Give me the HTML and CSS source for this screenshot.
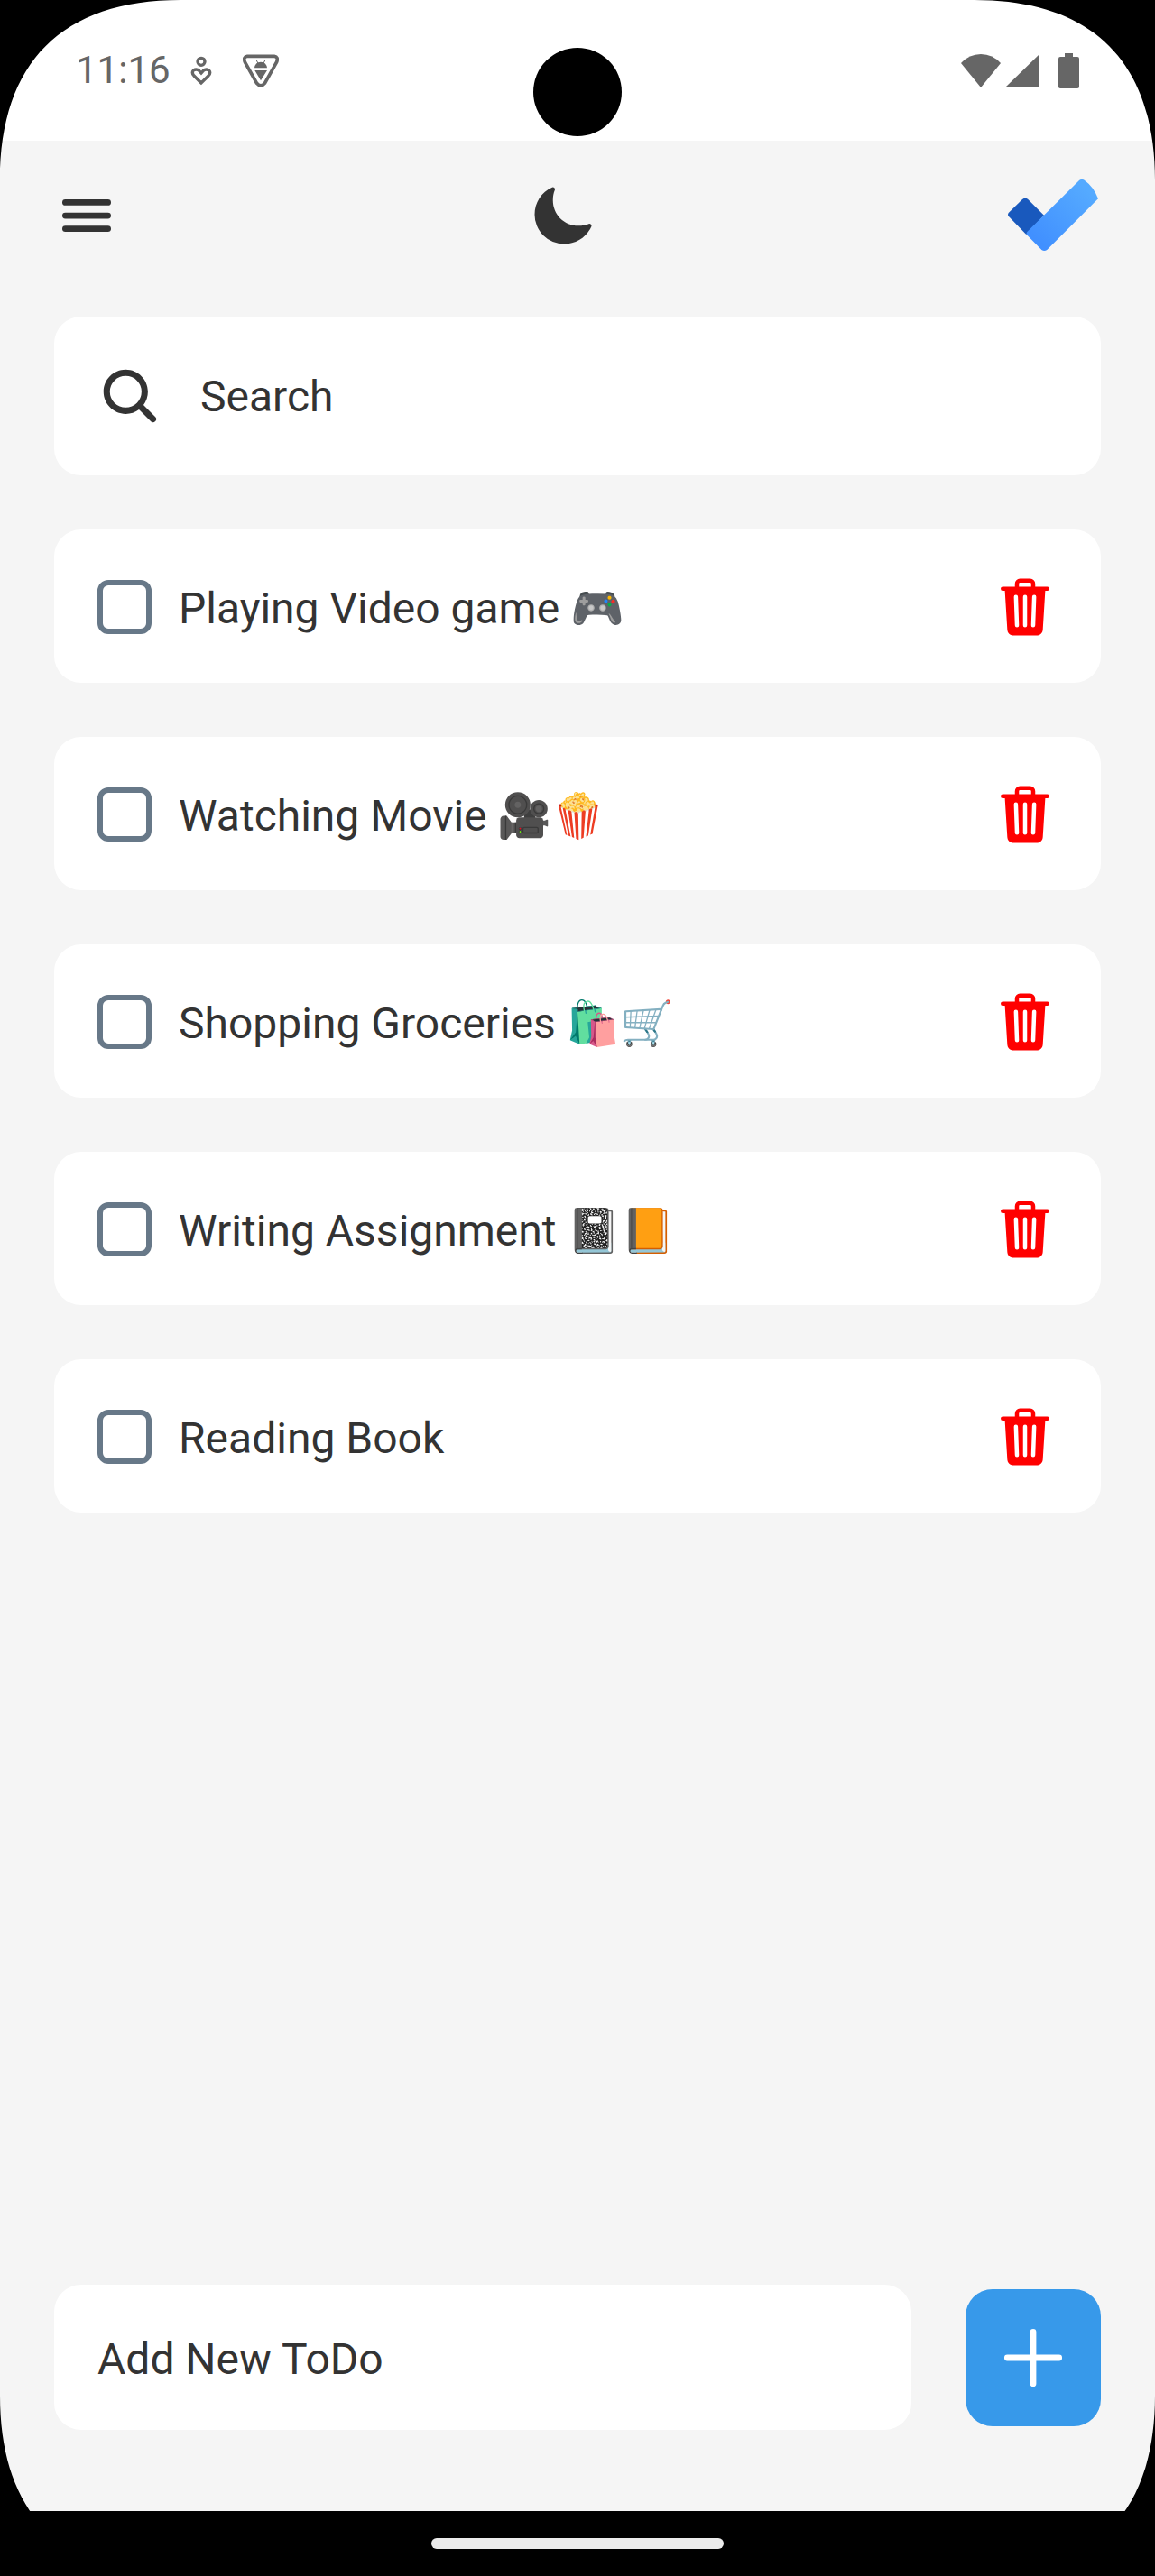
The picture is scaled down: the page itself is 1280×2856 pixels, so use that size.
FILE: index.html
```html
<!DOCTYPE html>
<html lang="en">
<head>
<meta charset="utf-8">
<meta name="viewport" content="width=device-width, initial-scale=1">
<title>ToDo</title>
<link rel="stylesheet" href="styles.css">
</head>
<body>
<svg class="defs" aria-hidden="true">
  <symbol id="trash" viewBox="0 0 512 512"><path d="M432 96h-96V72a40 40 0 00-40-40h-80a40 40 0 00-40 40v24H80a16 16 0 000 32h17l19 304.92c1.42 26.85 22 47.08 48 47.08h184c26.13 0 46.3-19.78 48-47l19-305h17a16 16 0 000-32zM192.57 416H192a16 16 0 01-16-15.43l-8-224a16 16 0 1132-1.14l8 224A16 16 0 01192.57 416zM272 400a16 16 0 01-32 0V176a16 16 0 0132 0zm32-304h-96V72a7.91 7.91 0 018-8h80a7.91 7.91 0 018 8zm32 304.57A16 16 0 01320 416h-.58A16 16 0 01304 399.43l8-224a16 16 0 1132 1.14z"/></symbol>
  <symbol id="corner" viewBox="0 0 200 200"><path d="M0 0H200C69 0 0 69 0 200z"/></symbol>
</svg>
<div class="screen">
  <div class="status">
    <div class="status-left">
      <span class="time">11:16</span>
      <svg class="wellbeing" viewBox="633 184 72 99" fill="none" stroke="currentColor" stroke-width="10"><circle cx="669" cy="203" r="12"/><path d="M669 274L645 250Q636 240 643 232Q653 225 662 233L669 241L676 233Q685 225 695 232Q702 240 693 250z"/></svg>
      <svg class="debug" viewBox="807 180 120 111"><path d="M822 187H912Q926 189 920 206L881 276Q867 293 853 276L814 206Q808 189 822 187z" fill="none" stroke="currentColor" stroke-width="11"/><path d="M846 226Q848 207 867 206Q886 207 888 226zM847 234H888L867 268z" fill="currentColor"/><path d="M852 199L858 211M882 199L876 211" stroke="currentColor" stroke-width="3"/></svg>
    </div>
    <div class="status-right">
      <svg class="wifi" viewBox="0 0 46 39"><path d="M23 38L1 11Q10 1 23 1T45 11z"/></svg>
      <svg class="signal" viewBox="0 0 39 39"><path d="M0 38L38 1V38z"/></svg>
      <svg class="battery" viewBox="0 0 23 39"><path d="M7 0h9v4h5q2 0 2 2v31q0 2-2 2H2q-2 0-2-2V6q0-2 2-2h5z"/></svg>
    </div>
    <div class="camera"></div>
  </div>

  <main class="app">
    <header class="header">
      <button class="icon-btn" aria-label="Menu"><svg class="icon" viewBox="0 0 512 512" fill="none" stroke="currentColor" stroke-width="48" stroke-linecap="round"><path d="M88 152H424M88 256H424M88 360H424"/></svg></button>
      <button class="icon-btn" aria-label="Dark mode"><svg class="icon" viewBox="0 0 512 512"><path d="M264 480A232 232 0 0132 248c0-94 54-178.28 137.61-214.67a16 16 0 0121.06 21.06C181.07 76.43 176 104.66 176 136c0 110.28 89.72 200 200 200 31.34 0 59.57-5.07 81.61-14.67a16 16 0 0121.06 21.06C442.28 426 358 480 264 480z"/></svg></button>
      <svg class="logo" viewBox="408 597 312 240" role="img" aria-label="ToDo logo">
        <defs><linearGradient id="tick" x1="0" y1="1" x2="1" y2="0"><stop offset=".15" stop-color="#4190ff"/><stop offset=".85" stop-color="#55aaff"/></linearGradient></defs>
        <path fill="#1959bd" d="M413 719Q409 714 413 708L459 663Q468 656 477 662L531 716L472 780z"/>
        <path fill="url(#tick)" d="M523 831L475 782Q471 776 475 771L648 600Q656 594 665 599Q697 622 711 661L541 831Q532 837 523 831z"/>
      </svg>
    </header>

    <label class="card search">
      <svg class="icon" viewBox="0 0 512 512" aria-hidden="true"><path d="M456.69 421.39L362.6 327.3a173.81 173.81 0 0034.84-104.58C397.44 126.38 319.06 48 222.72 48S48 126.38 48 222.72s78.38 174.72 174.72 174.72A173.81 173.81 0 00327.3 362.6l94.09 94.09a25 25 0 0035.3-35.3zM97.92 222.72a124.8 124.8 0 11124.8 124.8 124.95 124.95 0 01-124.8-124.8z"/></svg>
      <input class="field query" type="search" placeholder="Search" aria-label="Search">
    </label>

    <ul class="list">
      <li class="card item"><input class="check" type="checkbox" id="t1"><label class="text" for="t1">Playing Video game 🎮</label><button class="icon-btn delete" aria-label="Delete"><svg class="icon"><use href="#trash"/></svg></button></li>
      <li class="card item"><input class="check" type="checkbox" id="t2"><label class="text" for="t2">Watching Movie 🎥🍿</label><button class="icon-btn delete" aria-label="Delete"><svg class="icon"><use href="#trash"/></svg></button></li>
      <li class="card item"><input class="check" type="checkbox" id="t3"><label class="text" for="t3">Shopping Groceries 🛍️🛒</label><button class="icon-btn delete" aria-label="Delete"><svg class="icon"><use href="#trash"/></svg></button></li>
      <li class="card item"><input class="check" type="checkbox" id="t4"><label class="text" for="t4">Writing Assignment 📓📙</label><button class="icon-btn delete" aria-label="Delete"><svg class="icon"><use href="#trash"/></svg></button></li>
      <li class="card item"><input class="check" type="checkbox" id="t5"><label class="text" for="t5">Reading Book</label><button class="icon-btn delete" aria-label="Delete"><svg class="icon"><use href="#trash"/></svg></button></li>
    </ul>

    <form class="add">
      <input class="card field new" type="text" placeholder="Add New ToDo" aria-label="Add New ToDo">
      <button class="add-btn" type="button" aria-label="Add"><svg class="plus" viewBox="0 0 512 512" fill="none" stroke="currentColor" stroke-width="34" stroke-linecap="round"><path d="M256 112V400M400 256H112"/></svg></button>
    </form>
  </main>

  <div class="nav"><div class="handle"></div></div>

  <svg class="corner top left"><use href="#corner"/></svg>
  <svg class="corner top right"><use href="#corner"/></svg>
  <svg class="corner bottom left"><use href="#corner"/></svg>
  <svg class="corner bottom right"><use href="#corner"/></svg>
</div>
</body>
</html>
```
FILE: styles.css
```css
* { box-sizing: border-box; }
body { margin: 0; background: #000; color: #333; font: 48px/56px Roboto, "Noto Color Emoji", sans-serif; }
button, input { font: inherit; color: inherit; border: 0; padding: 0; margin: 0; background: none; }
svg { display: block; fill: currentColor; }
svg[fill="none"] { fill: none; }
.defs { display: none; }

.screen { position: relative; display: flex; flex-direction: column; min-height: 100vh; background: #f5f5f5; overflow: hidden; }

/* status bar */
.status { position: relative; display: flex; justify-content: space-between; padding: 58px 84px; background: #fff; color: #666; }
.status-left, .status-right { display: flex; align-items: center; height: 40px; }
.time { font-size: 42px; line-height: 40px; margin-right: 22px; }
.wellbeing { width: 24px; height: 33px; margin-right: 34px; }
.debug { width: 40px; height: 37px; }
.wifi { width: 46px; height: 39px; margin-right: 4px; }
.signal { width: 39px; height: 39px; margin-right: 20px; }
.battery { width: 23px; height: 39px; }
.camera { position: absolute; left: 50%; top: 53px; width: 98px; height: 98px; border-radius: 50%; background: #000; transform: translateX(-50%); }

.app { flex: 1; display: flex; flex-direction: column; padding: 43px 60px 90px; }
.header { display: flex; align-items: center; justify-content: space-between; margin-bottom: 72px; }
.icon { width: 72px; height: 72px; flex: none; }
.icon-btn { flex: none; cursor: pointer; }
.logo { width: 104px; height: 80px; }

.card { background: #fff; border-radius: 30px; }
.search { display: flex; align-items: center; gap: 42px; padding: 52px 48px; margin-bottom: 60px; }
.field { flex: 1; min-width: 0; appearance: none; outline: none; }
.field::placeholder { color: #333; opacity: 1; }
.query { padding-top: 2px; }

.list { display: flex; flex-direction: column; gap: 60px; margin: 0 0 60px; padding: 0; list-style: none; }
.item { display: flex; align-items: center; padding: 50px 48px 48px; }
.check { appearance: none; width: 60px; height: 60px; flex: none; border: 6px solid #677888; border-radius: 12px; margin-right: 30px; }
.check:checked { background: #677888; }
.text { flex: 1; padding-top: 4px; height: 60px; }
.delete { color: #f00; }

.add { display: flex; align-items: center; gap: 60px; margin-top: auto; }
.new { background: #fff; padding: 55px 48px 50px; }
.add-btn { display: flex; padding: 25px 24px; border-radius: 30px; background: #3799ea; color: #fff; cursor: pointer; }
.plus { width: 102px; height: 102px; }

/* system navigation */
.nav { display: flex; justify-content: center; padding: 30px 0; background: #000; }
.handle { width: 324px; height: 12px; border-radius: 6px; background: #ebebeb; }

/* rounded display corners */
.corner { position: absolute; width: 200px; height: 200px; color: #000; pointer-events: none; }
.top { top: 0; }
.bottom { bottom: 0; }
.left { left: 0; }
.right { right: 0; transform: scaleX(-1); }
.bottom.left { transform: scaleY(-1); }
.bottom.right { transform: scale(-1, -1); }
```
